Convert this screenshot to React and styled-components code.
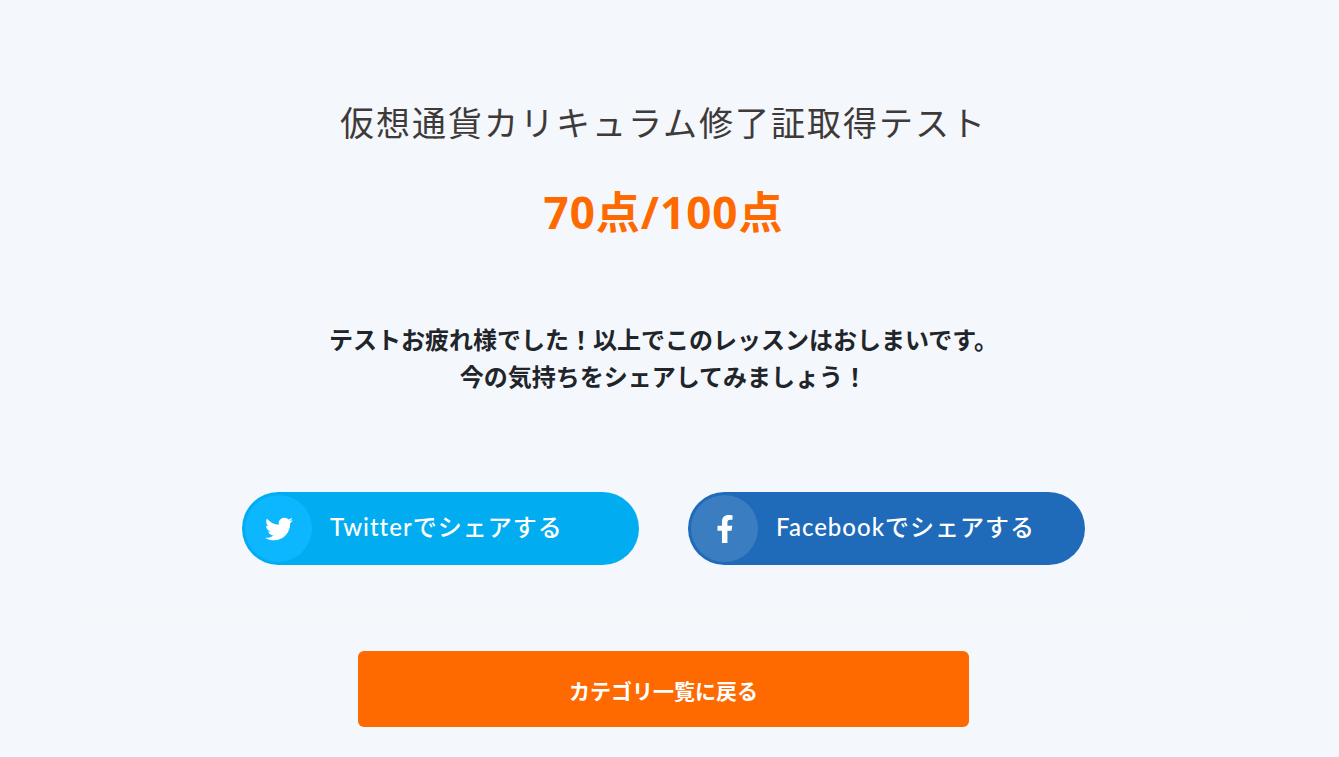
import React from "react"
import styled, { createGlobalStyle } from "styled-components";
import { FaTwitter, FaFacebookF } from "react-icons/fa";

const GlobalStyle = createGlobalStyle`
  * {
    box-sizing: border-box;
  }

  body {
    margin: 0;
    background: #f4f7fc;
    color: #212529;
    font-family: "Noto Sans CJK JP", sans-serif;
  }
`;

const Page = styled.main`
  display: flex;
  flex-direction: column;
  align-items: center;
  padding: 96px 88px 30px 76px;
  text-align: center;
`;

const Title = styled.h1`
  margin: 0;
  color: #3e3a39;
  font-size: 34px;
  font-weight: 400;
  line-height: 52px;
  letter-spacing: 2px;
`;

const Score = styled.p`
  margin: 32px 0 0;
  color: #ff6a00;
  font-family: "Open Sans", "Noto Sans CJK JP", sans-serif;
  font-size: 44px;
  font-weight: 700;
  line-height: 64px;
  letter-spacing: 1px;
`;

const Message = styled.p`
  margin: 76px 0 0;
  font-size: 24px;
  font-weight: 700;
  line-height: 37px;
`;

const ShareList = styled.div`
  display: flex;
  flex-wrap: wrap;
  justify-content: center;
  gap: 24px 49px;
  width: 100%;
  margin-top: 98px;
`;

const ShareLink = styled.a`
  display: flex;
  align-items: center;
  gap: 18px;
  width: 397px;
  max-width: 100%;
  padding: 3px;
  border-radius: 40px;
  background: ${props => props.$background};
  color: #fff;
  font-family: Lato, "Noto Sans CJK JP", sans-serif;
  font-size: 24px;
  font-weight: 500;
  line-height: 36px;
  letter-spacing: 1px;
  text-decoration: none;

  &:hover {
    opacity: 0.85;
  }
`;

const ShareLabel = styled.span`
  padding-bottom: 4px;
`;

const ShareIcon = styled.span`
  display: grid;
  place-items: center;
  flex: none;
  width: 67px;
  height: 67px;
  border-radius: 50%;
  background: ${props => props.$background};
  font-size: 28px;
`;

const Divider = styled.hr`
  width: 100%;
  height: 2px;
  margin: 46px 0 38px;
  border: 0;
  background: #f5f6f7;
`;

const BackButton = styled.button`
  width: 611px;
  max-width: 100%;
  height: 76px;
  padding: 2px 0 0;
  border: 0;
  border-radius: 6px;
  background: #ff6a00;
  color: #fff;
  font: 700 21px "Noto Sans CJK JP", sans-serif;
  cursor: pointer;
`;

function App() {
  return (
    <>
      <GlobalStyle />
      <Page>
        <Title>仮想通貨カリキュラム修了証取得テスト</Title>
        <Score>70点/100点</Score>
        <Message>
          テストお疲れ様でした！以上でこのレッスンはおしまいです。
          <br />
          今の気持ちをシェアしてみましょう！
        </Message>
        <ShareList>
          <ShareLink href="#twitter" $background="#01acf0">
            <ShareIcon $background="#0db7ff"><FaTwitter /></ShareIcon>
            <ShareLabel>Twitterでシェアする</ShareLabel>
          </ShareLink>
          <ShareLink href="#facebook" $background="#206aba">
            <ShareIcon $background="#3b7dc1"><FaFacebookF /></ShareIcon>
            <ShareLabel>Facebookでシェアする</ShareLabel>
          </ShareLink>
        </ShareList>
        <Divider />
        <BackButton type="button">カテゴリ一覧に戻る</BackButton>
      </Page>
    </>
  )
}
export default App
